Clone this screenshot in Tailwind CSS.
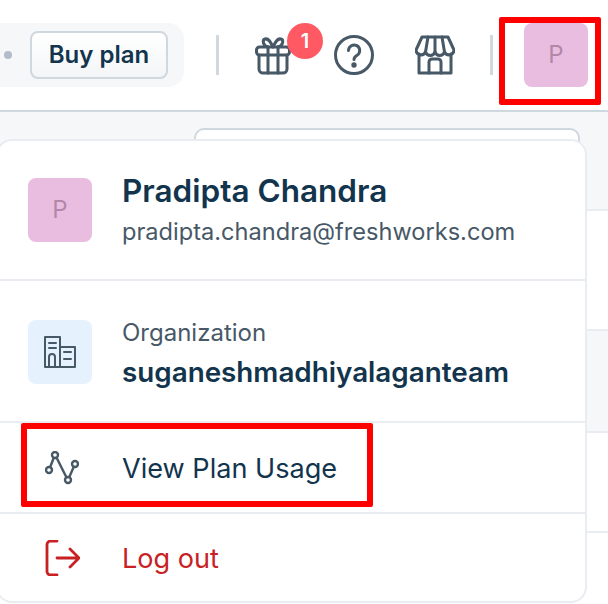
<!DOCTYPE html>
<html lang="en">
<head>
    <meta charset="UTF-8">
    <meta name="viewport" content="width=device-width, initial-scale=1.0">
    <title>Profile menu</title>
    <script src="https://cdn.jsdelivr.net/npm/@tailwindcss/browser@4"></script>
</head>
<body class="relative w-[608px] h-[604px] overflow-hidden bg-white font-['Inter','Liberation_Sans',sans-serif]">
    <!-- Top bar -->
    <header class="flex items-center h-[112px] border-b-2 border-[#cfd7df]">
        <div class="flex items-center w-[184px] h-[64px] pl-[4px] bg-[#f5f7f9] rounded-r-[16px]">
            <span class="w-2 h-2 rounded-full bg-[#b1bdc8]"></span>
            <button class="ml-[18px] w-[138px] h-[48px] rounded-[8px] border-2 border-[#cfd7df] bg-gradient-to-b from-white to-[#f3f5f7] text-[24px] font-semibold text-[#12344d]">Buy plan</button>
        </div>
        <span class="ml-[32px] w-[3px] h-[40px] bg-[#cfd7df]"></span>
        <div class="relative ml-[35px] w-[40px] h-[40px]">
            <svg class="w-[40px] h-[40px]" viewBox="0 0 40 40" fill="none" stroke="#475867" stroke-width="3" stroke-linecap="round" stroke-linejoin="round">
                <rect x="2.500" y="12" width="33" height="8" rx="3"/>
                <path d="M5 20v14a4 4 0 0 0 4 4h20a4 4 0 0 0 4-4V20"/>
                <path d="M14 12v26M24 12v26"/>
                <path d="M19 12c-2-4-4-9-8-8-3 1-2 7 3 8M19 12c2-4 4-9 8-8 3 1 2 7-3 8"/>
            </svg>
            <span class="absolute left-[33px] top-[-12px] w-[36px] h-[36px] rounded-full bg-[#ff5a63] text-white text-[20px] font-semibold flex items-center justify-center">1</span>
        </div>
        <svg class="ml-[40px] w-[40px] h-[40px]" viewBox="0 0 40 40" fill="none" stroke="#475867" stroke-width="3" stroke-linecap="round" stroke-linejoin="round">
            <circle cx="20" cy="20" r="18.500"/>
            <path d="M14.500 15.500a5.600 5.600 0 1 1 8.600 4.800c-2 1.200-3.100 2.300-3.100 4.200"/>
            <circle cx="20" cy="30" r="1.200" fill="#475867"/>
        </svg>
        <svg class="ml-[41px] w-[40px] h-[40px]" viewBox="0 0 40 40" fill="none" stroke="#475867" stroke-width="3" stroke-linecap="round" stroke-linejoin="round">
            <path d="M7 2h26l6 13a5 5 0 0 1-9.500 2 5 5 0 0 1-9.500 0 5 5 0 0 1-9.500 0A5 5 0 0 1 1 15z"/>
            <path d="M10.500 17 13 2M20 17V2M29.500 17 27 2"/>
            <path d="M4 19v19h32V19"/>
            <path d="M14 38V27a3 3 0 0 1 3-3h6a3 3 0 0 1 3 3v11"/>
        </svg>
        <span class="ml-[35px] w-[3px] h-[40px] bg-[#cfd7df]"></span>
        <div class="ml-[31px] w-[64px] h-[64px] rounded-[8px] bg-[#e9bddf] flex items-center justify-center text-[24px] text-[#b288a8]">P</div>
    </header>

    <!-- Page content behind the menu -->
    <main class="flex flex-col h-[492px]">
        <div class="h-[99px] bg-[#f5f7f9] border-b-2 border-[#e9edf1] pl-[194px] pt-[16px]">
            <div class="w-[386px] h-[83px] bg-white border-2 border-[#cfd7df] rounded-t-[10px]"></div>
        </div>
        <div class="h-[120px] bg-white border-b-2 border-[#e9edf1]"></div>
        <div class="h-[102px] bg-[#f5f7f9] border-b-2 border-[#e9edf1]"></div>
        <div class="h-[100px] bg-white border-b-2 border-[#e9edf1]"></div>
        <div class="flex-1 bg-white"></div>
    </main>

    <!-- Profile dropdown -->
    <div class="absolute left-[-4px] top-[139px] w-[591px] h-[464px] bg-white border-2 border-[#e9edf1] rounded-[16px] flex flex-col">
        <div class="flex items-center h-[140px] pl-[30px] border-b-2 border-[#e9edf1]">
            <div class="w-[64px] h-[64px] rounded-[8px] bg-[#e9bddf] flex items-center justify-center text-[24px] text-[#b288a8]">P</div>
            <div class="ml-[30px] mt-[2px]">
                <p class="text-[31.500px] leading-[38px] font-semibold text-[#12344d]">Pradipta Chandra</p>
                <p class="mt-[4px] text-[23.600px] leading-[36px] text-[#475867]">pradipta.chandra@freshworks.com</p>
            </div>
        </div>
        <div class="flex items-center h-[142px] pl-[30px] pt-[2px] border-b-2 border-[#e9edf1]">
            <div class="w-[64px] h-[64px] rounded-[8px] bg-[#e5f2fd] flex items-center justify-center">
                <svg class="w-[32px] h-[32px]" viewBox="0 0 32 32" fill="none" stroke="#475867" stroke-width="2" stroke-linecap="round" stroke-linejoin="round">
                    <path d="M1 31V1h15v30zM16 11h15v20H16zM1 31h30"/>
                    <path d="M5 7h7M5 12h7M20 16h7M20 23h7"/>
                    <path d="M5 31v-10a3 3 0 0 1 6 0v10"/>
                </svg>
            </div>
            <div class="ml-[30px] mt-[6px]">
                <p class="text-[24px] leading-[32px] text-[#475867]">Organization</p>
                <p class="mt-[2px] text-[27.800px] leading-[42px] font-semibold text-[#12344d]">suganeshmadhiyalaganteam</p>
            </div>
        </div>
        <div class="flex items-center h-[91px] pl-[47px] border-b-2 border-[#e9edf1]">
            <svg class="w-[34px] h-[34px]" viewBox="0 0 34 34" fill="none" stroke="#475867" stroke-width="2.400">
                <circle cx="10" cy="4" r="3"/>
                <circle cx="4" cy="19" r="3"/>
                <circle cx="30" cy="13" r="3"/>
                <circle cx="23" cy="29" r="3"/>
                <path d="M8.800 6.800 5 16.500M11.500 6.500 21.500 26.500M24.200 26.200 28.800 15.800"/>
            </svg>
            <span class="ml-[43px] mt-[4px] text-[27.100px] text-[#12344d]">View Plan Usage</span>
        </div>
        <div class="flex items-center flex-1 pl-[46px]">
            <svg class="w-[36px] h-[36px]" viewBox="0 0 36 36" fill="none" stroke="#c82124" stroke-width="2.800" stroke-linecap="round" stroke-linejoin="round">
                <path d="M13 1H6a4 4 0 0 0-3 3v28a4 4 0 0 0 3 3h7"/>
                <path d="M13 18h22M26 9l9 9-9 9"/>
            </svg>
            <span class="ml-[42px] mt-[4px] text-[27.100px] text-[#c82124]">Log out</span>
        </div>
    </div>

    <!-- Red annotation boxes -->
    <div class="absolute left-[499px] top-[17px] w-[102px] h-[88px] border-[6px] border-[#ff0000] rounded-[2px]"></div>
    <div class="absolute left-[21px] top-[423px] w-[352px] h-[84px] border-[6px] border-[#ff0000] rounded-[2px]"></div>
</body>
</html>
